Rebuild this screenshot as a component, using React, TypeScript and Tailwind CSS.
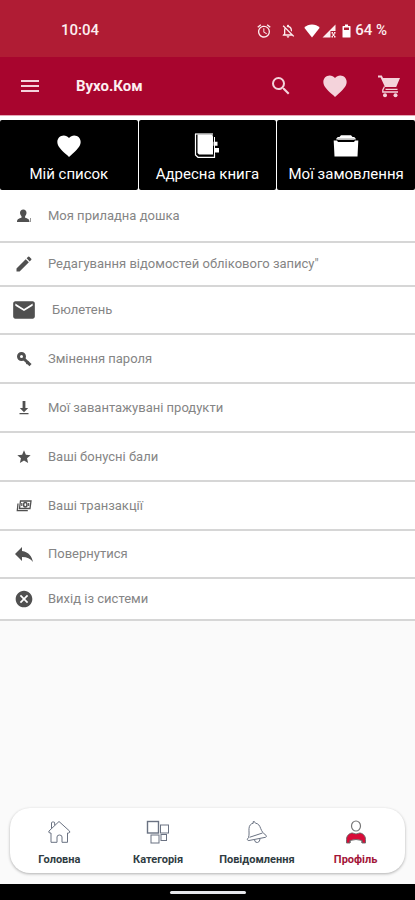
import React from 'react';
import {
  MdAlarm, MdCancel, MdEdit, MdEmail, MdFavorite, MdMenu,
  MdOutlineNotificationsOff, MdReply, MdSearch, MdStar,
} from 'react-icons/md';

type IconProps = { className?: string };

const WifiIcon = ({ className }: IconProps) => (
  <svg viewBox="0 0 16 14" className={className} fill="currentColor">
    <path d="M8 13.5 0.3 3.8C2.4 1.7 5 .6 8 .6s5.600 1.100 7.700 3.200z" />
  </svg>
);

const SignalIcon = ({ className }: IconProps) => (
  <svg viewBox="0 0 14 14" className={className} fill="currentColor">
    <path d="M13.500 .5V7H8.500v6.500H.5z" />
    <path d="M9.500 8h1.500v1.500H9.500zM12 8h1.500v1.500H12zM9.500 12h1.500v1.500H9.500zM12 12h1.500v1.500H12zM10.500 9.500h2v2.500h-2z" />
  </svg>
);

const BatteryIcon = ({ className }: IconProps) => (
  <svg viewBox="0 0 9 14" className={className}>
    <path d="M3 .5h3v1.500h2q.5 0 .5.5v10.500q0 .5-.5.5H1q-.5 0-.5-.5V2.500Q.5 2 1 2h2z" fill="currentColor" />
    <path d="M2 3.500h5V6H2z" fill="#b01c34" />
  </svg>
);

const CartIcon = ({ className }: IconProps) => (
  <svg viewBox="0 0 24 24" className={className} fill="currentColor">
    <path d="M1 1.500h3.800L6 4h17l-3.800 9H8L3.600 3.500H1z" />
    <path d="M7.500 12.500 5.800 16v2H21M8.500 15.300H20.500" fill="none" stroke="currentColor" strokeWidth="1.300" />
    <circle cx="8" cy="21.200" r="2" />
    <circle cx="18.500" cy="21.200" r="2" />
  </svg>
);

const AddressBookIcon = ({ className }: IconProps) => (
  <svg viewBox="0 0 26 26" className={className} fill="none" stroke="currentColor">
    <path d="M1.500 1v21L4 24.300h16.500V21" strokeWidth="1.200" />
    <path d="M1 1h18" strokeWidth="1.200" />
    <path d="M3.500 1.500H17q2 0 2 2V21.500H5L3.500 20z" fill="currentColor" stroke="none" />
    <path d="M20.500 4v18" strokeWidth="1" />
    <path d="M19.500 8.800h4v4h-4zM20.500 15h4.500v4.500h-4.500z" fill="currentColor" stroke="none" />
  </svg>
);

const FolderIcon = ({ className }: IconProps) => (
  <svg viewBox="0 0 26 24" className={className} fill="none" stroke="currentColor">
    <path d="M.7 6.500h3.300L5 8h16l1-1.500h3.300L24.500 22.500h-23z" fill="currentColor" stroke="none" />
    <path d="M3.500 5.300 5 3.700h16l1.500 1.600" strokeWidth="1.200" />
    <path d="M6 3.500 8 1.300h10l2 2.200zM5 4.300h16l.8 1.500H4.200z" fill="currentColor" stroke="none" />
  </svg>
);

const PersonIcon = ({ className }: IconProps) => (
  <svg viewBox="0 0 16 14" className={className} fill="currentColor">
    <path d="M7.300.5c2 0 3.200 1.400 3.200 3.300 0 1.500-.8 2.700-1.400 3.400v1.600c2.500.8 4.400 1.400 4.400 4.200H1c0-2.800 1.900-3.400 4.500-4.200V7.200C4.800 6.500 4 5.300 4 3.800 4 1.900 5.300.5 7.300.5z" />
    <path d="M14.500 9v4" fill="none" stroke="currentColor" strokeWidth=".6" />
  </svg>
);

const KeyIcon = ({ className }: IconProps) => (
  <svg viewBox="0 0 16 16" className={className} fill="none" stroke="currentColor">
    <circle cx="5.500" cy="5.500" r="3" strokeWidth="3" />
    <path d="M8 8 14.500 14.200" strokeWidth="3" />
    <path d="M10.500 13l2-2.500" strokeWidth="1.500" />
  </svg>
);

const DownloadIcon = ({ className }: IconProps) => (
  <svg viewBox="0 0 12 16" className={className} fill="currentColor">
    <path d="M4.600 1h2.800v7h2.800L6 12.300 1.800 8h2.800zM1.500 13h9v1.300h-9z" />
  </svg>
);

const CashIcon = ({ className }: IconProps) => (
  <svg viewBox="0 0 16 14" className={className} fill="none" stroke="currentColor">
    <path d="M4.500 2h10.500l-1 7.500H3.500z" strokeWidth="1.300" />
    <path d="M2 4.500 1.300 11.700h10.500" strokeWidth="1.300" />
    <ellipse cx="9.300" cy="5.700" rx="1.700" ry="2.200" strokeWidth="1.500" />
    <path d="M5.800 4v3M12.700 4v3" strokeWidth="1.200" />
  </svg>
);

const HomeIcon = ({ className }: IconProps) => (
  <svg viewBox="0 0 24 24" className={className} fill="none" stroke="currentColor" strokeLinejoin="round">
    <path d="M12 1.500 22.500 11q1 1.600-1 2h-1v9.300H15V17q0-2-2.500-2T10 17v5.300H4V13H3q-2-.4-1-2zM4.500 8.500V3q0-1 1-1h1.200q1 0 1 1v2.300" />
  </svg>
);

const CategoryIcon = ({ className }: IconProps) => (
  <svg viewBox="0 0 24 24" className={className} fill="none" stroke="currentColor">
    <rect x="1.500" y="1.500" width="11" height="11.500" strokeWidth="1.400" />
    <rect x="14.500" y="5" width="8" height="8" />
    <rect x="5" y="15" width="8" height="8" />
    <rect x="15" y="14.500" width="5.500" height="6" />
  </svg>
);

const BellIcon = ({ className }: IconProps) => (
  <svg viewBox="0 0 24 24" className={className} fill="none" stroke="currentColor" strokeLinejoin="round">
    <path d="M3.500 17.500c1-3 .3-6 .5-9C4.200 5.300 6 3.600 8.300 3.200L8 1.800q1.300-.8 2 .5l.5.9c3 .4 4.200 2.500 5.200 5.300 1 2.700 2.500 5 5.300 6.800.8.600.5 1.700-.5 2L4 20.500c-1.300.2-2-.8-1.500-1.600z" />
    <path d="M4.500 17.300 17.500 13M9.500 20q.6 3 3 2.500t2.500-3.600" />
  </svg>
);

const ProfileIcon = ({ className }: IconProps) => (
  <svg viewBox="0 0 24 24" className={className} fill="none">
    <ellipse cx="12" cy="6" rx="4.500" ry="5" stroke="#777" strokeWidth="1.200" />
    <path d="M2.500 23v-3.500c0-4 3-6.500 6-6.500q3.500 2 7 0c3 0 6 2.500 6 6.500V23H18v-2.500q-6-2-12 0V23z" fill="#d80b38" stroke="#666" strokeWidth=".9" />
    <path d="M6 20.500V23M18 20.500V23" stroke="#666" />
  </svg>
);

const tabs = [
  { label: 'Мій список', icon: <MdFavorite className="w-7 h-7" /> },
  { label: 'Адресна книга', icon: <AddressBookIcon className="w-[26px] h-[26px]" /> },
  { label: 'Мої замовлення', icon: <FolderIcon className="w-[26px] h-6" /> },
];

const menuItems = [
  { label: 'Моя приладна дошка', icon: <PersonIcon className="w-4 h-3.5" />, row: 'h-[50px]' },
  { label: 'Редагування відомостей облікового запису"', icon: <MdEdit className="w-5 h-5" />, row: 'h-[42px]' },
  { label: 'Бюлетень', icon: <MdEmail className="w-6.5 h-6.5" />, row: 'h-[46px]', text: 'pl-1' },
  { label: 'Змінення пароля', icon: <KeyIcon className="w-4 h-4" />, row: 'h-[47px]' },
  { label: 'Мої завантажувані продукти', icon: <DownloadIcon className="w-3 h-4" />, row: 'h-[47px]' },
  { label: 'Ваші бонусні бали', icon: <MdStar className="w-4 h-4" />, row: 'h-[47px]' },
  { label: 'Ваші транзакції', icon: <CashIcon className="w-4 h-3.5" />, row: 'h-[47px]' },
  { label: 'Повернутися', icon: <MdReply className="w-6 h-6" />, row: 'h-[46px]' },
  { label: 'Вихід із системи', icon: <MdCancel className="w-5 h-5" />, row: 'h-10' },
];

const navItems = [
  { label: 'Головна', icon: <HomeIcon className="w-6 h-6 text-gray-500" /> },
  { label: 'Категорія', icon: <CategoryIcon className="w-6 h-6 text-gray-500" /> },
  { label: 'Повідомлення', icon: <BellIcon className="w-6 h-6 text-gray-500" /> },
  { label: 'Профіль', icon: <ProfileIcon className="w-6 h-6" />, active: true },
];

export default function App() {
  return (
    <div className="min-h-screen flex flex-col bg-[#fafafa] font-[Roboto,sans-serif]">
      {/* Status bar */}
      <div className="h-[57px] bg-[#b01c34] text-[#fdeef0] flex items-center justify-between pt-1 pl-[61px] pr-7">
        <span className="text-[15px] font-medium">10:04</span>
        <div className="flex items-center">
          <MdAlarm className="w-4 h-4 mr-2" />
          <MdOutlineNotificationsOff className="w-4 h-4 mr-2" />
          <WifiIcon className="w-4 h-3.5 mr-0.5 text-white" />
          <SignalIcon className="w-3.5 h-3.5 mr-1.5" />
          <BatteryIcon className="w-[9px] h-3.5 mr-1 text-white" />
          <span className="text-[15px] font-medium">64 %</span>
        </div>
      </div>

      {/* App bar */}
      <header className="h-[59px] bg-[#a8052e] border-b border-[#e5a9b7] text-[#f4d3db] flex items-center pl-[18px] pr-3.5">
        <button aria-label="Меню"><MdMenu className="w-6 h-6" /></button>
        <h1 className="flex-1 pl-[34px] text-[15px] font-bold text-[#fdeef0]">Вухо.Ком</h1>
        <div className="flex items-center gap-7">
          <button aria-label="Пошук"><MdSearch className="w-6 h-6" /></button>
          <button aria-label="Список бажань"><MdFavorite className="w-7 h-7" /></button>
          <button aria-label="Кошик"><CartIcon className="w-6 h-6" /></button>
        </div>
      </header>

      <main>
        <div className="grid grid-cols-3 gap-px bg-white pt-1 pb-px">
          {tabs.map((tab) => (
            <button
              key={tab.label}
              className="h-[70px] rounded-xs bg-black text-white flex flex-col items-center justify-end pb-1.5"
            >
              <span className="h-7 flex items-center">{tab.icon}</span>
              <span className="text-[15px] leading-5 mt-1 whitespace-nowrap">{tab.label}</span>
            </button>
          ))}
        </div>

        <ul className="bg-white">
          {menuItems.map((item) => (
            <li key={item.label} className="border-b-2 border-[#d6d6d6]">
              <button className={`${item.row} w-full flex items-center pl-2 text-left`}>
                <span className="w-8 flex justify-center text-[#505050]">{item.icon}</span>
                <span className={`ml-2 text-[13px] text-[#858585] ${item.text ?? ''}`}>{item.label}</span>
              </button>
            </li>
          ))}
        </ul>
      </main>

      {/* Bottom navigation */}
      <nav className="mt-auto mx-2.5 mb-[11px] h-[65px] rounded-[20px] bg-white shadow-[0_1px_3px_rgba(0,0,0,0.3)] grid grid-cols-4">
        {navItems.map((item) => (
          <button
            key={item.label}
            className={`flex flex-col items-center justify-center gap-2 pt-1.5 text-[11px] leading-4 font-bold ${
              item.active ? 'text-[#a31438]' : 'text-[#303c42]'
            }`}
          >
            {item.icon}
            {item.label}
          </button>
        ))}
      </nav>

      <div className="h-4 bg-black flex justify-center items-center">
        <div className="w-[76px] h-[3px] rounded-full bg-gray-200" />
      </div>
    </div>
  );
}
